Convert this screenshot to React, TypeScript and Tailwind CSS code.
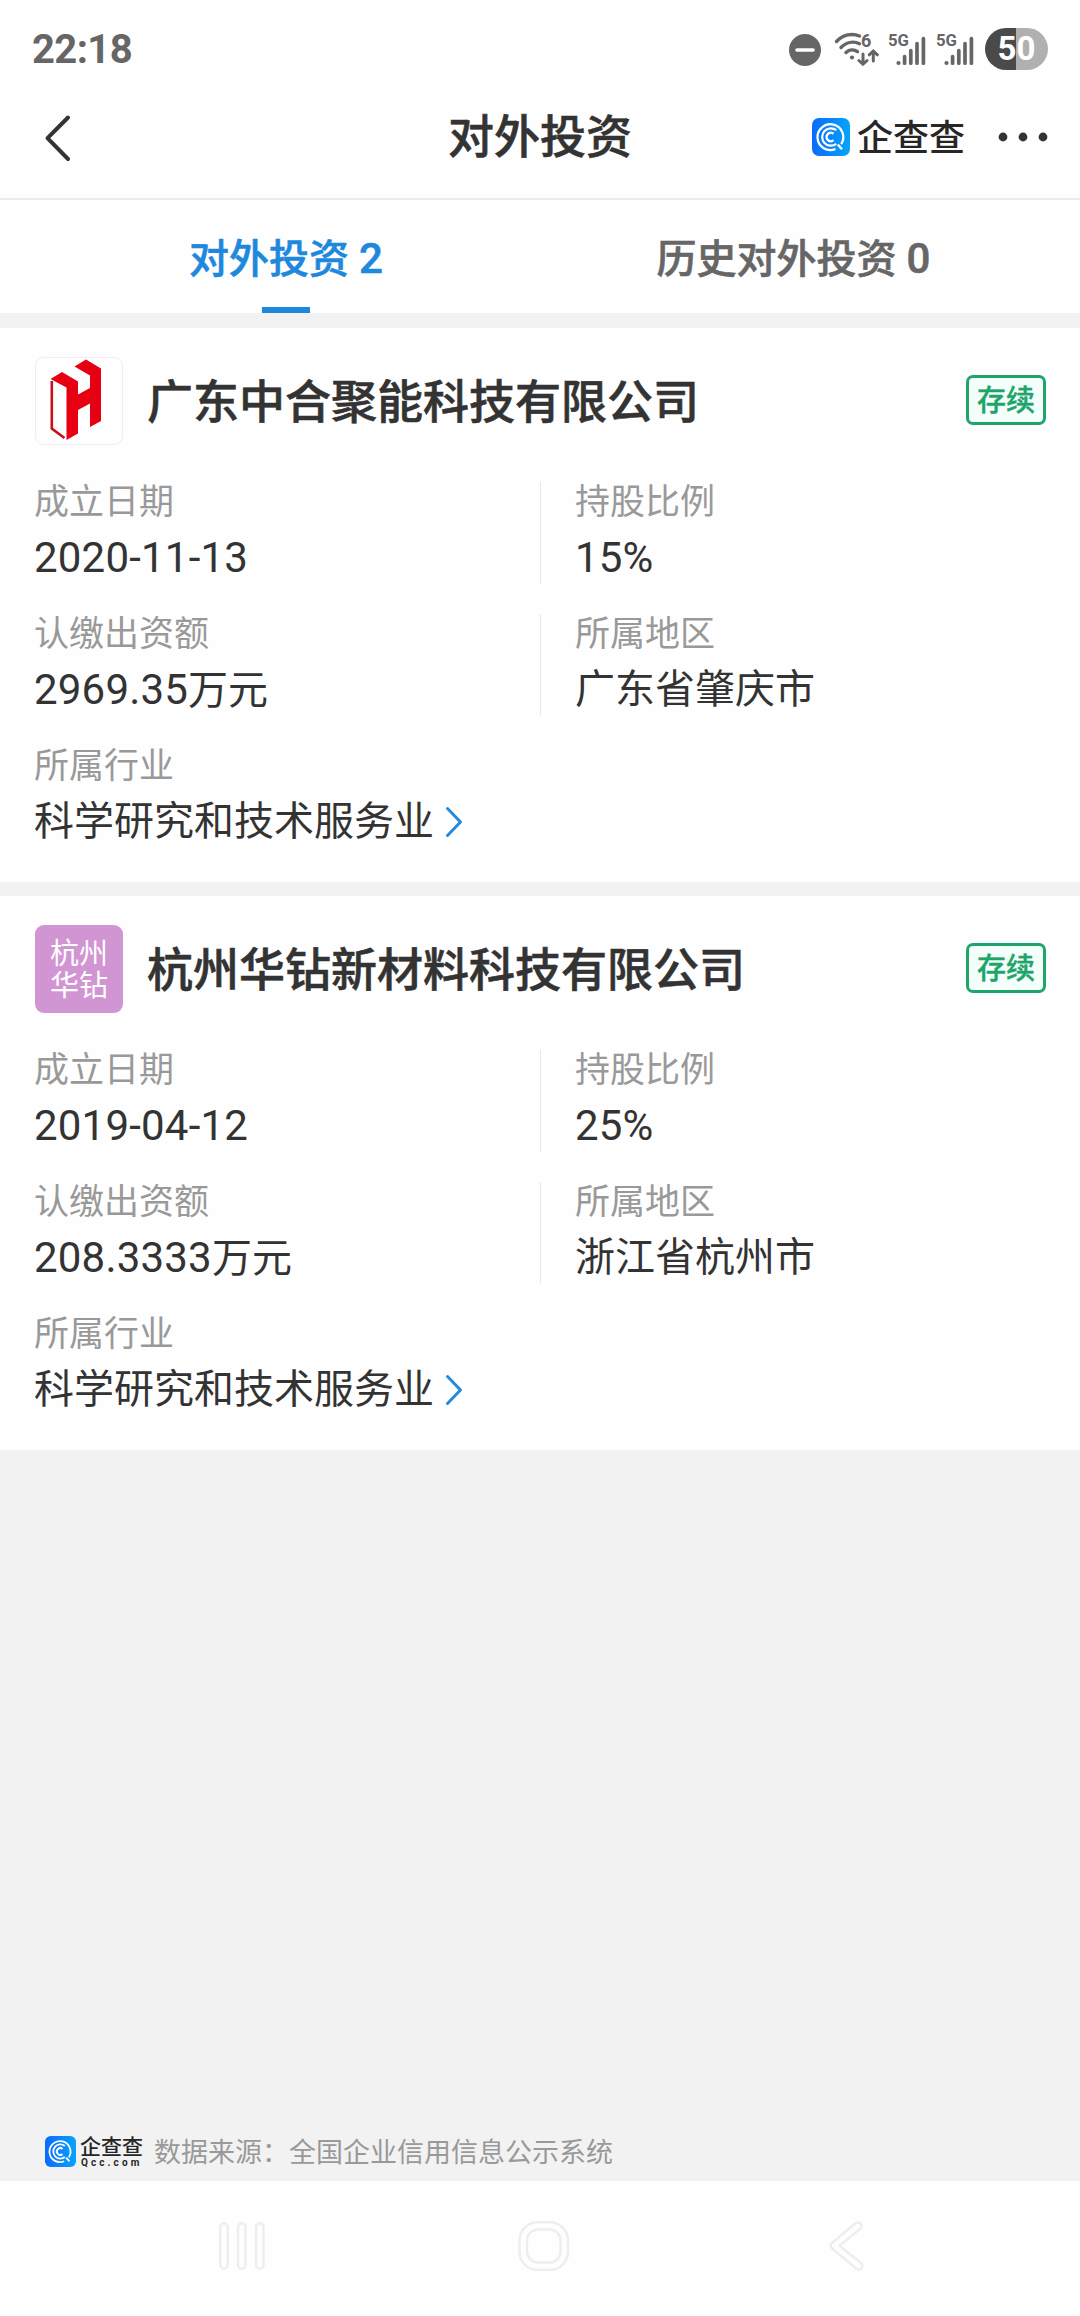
import { Fragment } from 'react'

interface Company {
  name: string
  founded: string
  ratio: string
  amount: string
  region: string
  industry: string
  logo: 'h' | 'text'
}

const companies: Company[] = [
  {
    name: '广东中合聚能科技有限公司',
    founded: '2020-11-13',
    ratio: '15%',
    amount: '2969.35万元',
    region: '广东省肇庆市',
    industry: '科学研究和技术服务业',
    logo: 'h',
  },
  {
    name: '杭州华钻新材料科技有限公司',
    founded: '2019-04-12',
    ratio: '25%',
    amount: '208.3333万元',
    region: '浙江省杭州市',
    industry: '科学研究和技术服务业',
    logo: 'text',
  },
]

// latin digits run slightly larger than the hanzi next to them
function Mixed({ text }: { text: string }) {
  return (
    <>
      {text.split(/([\d.%-]+)/).map((part, i) =>
        i % 2 ? (
          <span key={i} className="text-[42px] tracking-[0.2px]">
            {part}
          </span>
        ) : (
          <Fragment key={i}>{part}</Fragment>
        ),
      )}
    </>
  )
}

function Signal() {
  return (
    <svg width="39" height="34" viewBox="0 0 39 34" fill="none" className="shrink-0 overflow-visible">
      <text x="0" y="13.5" fontSize="17" fontWeight="700" fontFamily="Roboto, sans-serif" fill="#666" textLength="21" lengthAdjust="spacingAndGlyphs">
        5G
      </text>
      <circle cx="10.5" cy="31" r="2.1" fill="#666" />
      <path d="M16.6 24.5v6.7M22.8 18.5v12.7M29 11.5v19.7M35.4 6.5v24.7" stroke="#666" strokeWidth="3.7" strokeLinecap="round" />
    </svg>
  )
}

function StatusBar() {
  return (
    <div className="h-[98px] flex items-start justify-between pl-[32px] pr-[32px]">
      <div className="mt-[29px] text-[40px] leading-[42px] font-bold text-[#666] tracking-[-0.6px]">22:18</div>
      <div className="flex mt-[28px] h-[42px] items-center">
        <svg width="32" height="32" viewBox="0 0 32 32" className="mt-[2px]">
          <circle cx="16" cy="16" r="16" fill="#666" />
          <path d="M8 16h16" stroke="#fff" strokeWidth="3.6" strokeLinecap="round" />
        </svg>
        <svg width="46" height="36" viewBox="0 0 46 36" fill="none" stroke="#666" strokeWidth="3.4" strokeLinecap="round" className="ml-[13px]">
          <path d="M2.5 10.5C9 3.6 18 1.8 25.5 5" />
          <path d="M7 16.5c5-5.2 12-6.6 18.5-3.8" />
          <path d="M12 21.5c3.5-3.2 8-3.4 11.5-.8" />
          <circle cx="18" cy="26.5" r="2.1" fill="#666" stroke="none" />
          <path d="M29 23v10M24.9 29.5 29 33.3l4.1-3.8M39.3 30V20.5M35.2 23.8l4.1-3.8 4.1 3.8" strokeWidth="3" />
          <text x="27" y="16.3" fontSize="18" fontWeight="700" fontFamily="Roboto, sans-serif" fill="#666" stroke="none">
            6
          </text>
        </svg>
        <div className="ml-[8px] flex gap-[9px]">
          <Signal />
          <Signal />
        </div>
        <div className="relative ml-[10px] w-[63px] h-[42px] rounded-full overflow-hidden flex">
          <div className="w-[31px] bg-[#4a4a4a]" />
          <div className="flex-1 bg-[#b0b0b0]" />
          <span className="absolute inset-0 text-center text-[33px] leading-[42px] font-bold text-white">50</span>
        </div>
      </div>
    </div>
  )
}

function QccIcon({ size }: { size: number }) {
  return (
    <svg width={size} height={size} viewBox="0 0 38 38" fill="none" stroke="#fff" className="shrink-0">
      <defs>
        <linearGradient id="qcc" x1="0" y1="0" x2="1" y2="0">
          <stop offset="0" stopColor="#0a6bfb" />
          <stop offset="1" stopColor="#06a4fb" />
        </linearGradient>
      </defs>
      <rect width="38" height="38" rx="7" fill="url(#qcc)" stroke="none" />
      <path d="M29.2 26.2A12.9 12.9 0 1 0 23.5 31" strokeWidth="2.2" />
      <path d="M25.8 26.6 30 31.2" strokeWidth="2.4" />
      <path d="M24.3 12.2A8.7 8.7 0 1 0 24.3 25.8" strokeWidth="2.2" />
      <path d="M21.5 15.8A4.2 4.2 0 1 0 21.5 22.2" strokeWidth="2.4" />
    </svg>
  )
}

function HeaderBar() {
  return (
    <div className="h-[102px] border-b-2 border-[#ececec] grid grid-cols-[1fr_auto_1fr] items-start">
      <svg width="30" height="50" viewBox="0 0 30 50" fill="none" className="ml-[43px] mt-[15px]">
        <path d="M25 4.5 4.5 25.2 25 46" stroke="#333" strokeWidth="4" strokeLinecap="round" strokeLinejoin="round" />
      </svg>
      <h1 className="text-[46px] leading-[50px] mt-[14px] font-medium text-[#333] [-webkit-text-stroke:0.6px]">对外投资</h1>
      <div className="flex justify-end items-center h-[38px] mt-[20px] pr-[32px]">
        <QccIcon size={38} />
        <span className="ml-[7px] mt-[3px] text-[36px] leading-[38px] font-medium text-[#262626]">企查查</span>
        <svg width="50" height="10" viewBox="0 0 50 10" fill="#333" className="ml-[33px]">
          <circle cx="5" cy="5" r="4.4" />
          <circle cx="25" cy="5" r="4.4" />
          <circle cx="45" cy="5" r="4.4" />
        </svg>
      </div>
    </div>
  )
}

function Tabs() {
  return (
    <div className="h-[113px] flex text-[40px] leading-[52px] font-medium [-webkit-text-stroke:0.6px]">
      <div className="w-[572px] flex flex-col items-center justify-between text-[#1e88dd]">
        <span className="mt-[33px] flex items-baseline gap-[10px]">
          对外投资<Mixed text="2" />
        </span>
        <span className="w-[48px] h-[6px] bg-[#1e88dd]" />
      </div>
      <div className="w-[443px] flex justify-center text-[#666]">
        <span className="mt-[33px] flex items-baseline gap-[10px]">
          历史对外投资<Mixed text="0" />
        </span>
      </div>
    </div>
  )
}

function CompanyLogo({ kind }: { kind: Company['logo'] }) {
  if (kind === 'text') {
    return (
      <div className="size-[88px] rounded-[9px] bg-[#d295d3] text-white text-[29px] leading-[32px] pt-[2px] grid place-content-center">
        <span>杭州</span>
        <span>华钻</span>
      </div>
    )
  }
  return (
    <div className="size-[88px] rounded-[9px] border border-[#efefef] overflow-hidden">
      <svg width="86" height="86" viewBox="1 1 86 86" fill="#e60012">
        <path d="M15.5 22 27 15l16 9.5v13L55 31V18.5L39.5 9.5 51 2.5 66 11.5V64L55 70V46.5L43 53V76.5L31.5 83V30.5Z" />
        <path d="M16.8 24v47.5L29.5 81" fill="none" stroke="#c8101c" strokeWidth="2.6" />
      </svg>
    </div>
  )
}

function Field({ label, value, divider, arrow }: { label: string; value: string; divider?: boolean; arrow?: boolean }) {
  return (
    <div className={divider ? 'h-[102px] border-l border-[#e8e8e8] pl-[34px]' : 'h-[102px]'}>
      <div className="pt-[2px] text-[35px] leading-[38px] text-[#999]">{label}</div>
      <div className="mt-[11px] h-[50px] text-[40px] leading-[50px] text-[#333] flex items-baseline">
        <Mixed text={value} />
        {arrow && (
          <svg width="20" height="34" viewBox="0 0 20 34" fill="none" className="ml-[10px] self-center">
            <path d="M3.5 3.5 16.5 17 3.5 30.5" stroke="#2589dc" strokeWidth="3" strokeLinecap="round" strokeLinejoin="round" />
          </svg>
        )}
      </div>
    </div>
  )
}

function CompanyCard({ company }: { company: Company }) {
  return (
    <section className="bg-[#fefefe] h-[554px] pt-[29px] pl-[34px] pr-[34px]">
      <div className="flex items-center h-[88px] pl-px">
        <CompanyLogo kind={company.logo} />
        <h2 className="ml-[24px] flex-1 text-[46px] leading-[56px] pt-px font-medium text-[#333] [-webkit-text-stroke:0.6px]">{company.name}</h2>
        <span className="w-[80px] h-[50px] -mt-[2px] rounded-[7px] border-3 border-[#1fa56b] bg-[#f4fffb] text-[#1fa56b] text-[29px] leading-[46px] font-medium text-center [-webkit-text-stroke:0.4px]">
          存续
        </span>
      </div>
      <div className="mt-[37px] grid grid-cols-[506px_1fr] gap-y-[30px]">
        <Field label="成立日期" value={company.founded} />
        <Field label="持股比例" value={company.ratio} divider />
        <Field label="认缴出资额" value={company.amount} />
        <Field label="所属地区" value={company.region} divider />
        <Field label="所属行业" value={company.industry} arrow />
      </div>
    </section>
  )
}

function Footer() {
  return (
    <div className="mt-auto h-[45px] pl-[45px] flex items-start">
      <QccIcon size={31} />
      <div className="ml-[4px] w-[63px] pt-[2px] text-[#262626]">
        <div className="text-[21px] leading-[18px] font-medium">企查查</div>
        <div className="mt-[1px] text-[10px] leading-[11px] font-bold tracking-[3.1px] pl-px whitespace-nowrap">Qcc.com</div>
      </div>
      <p className="ml-[11px] mt-px text-[27px] leading-[32px] text-[#999]">数据来源：全国企业信用信息公示系统</p>
    </div>
  )
}

function NavBar() {
  return (
    <div className="h-[135px] bg-[#fefefe] flex pt-[40px] pl-[218px]">
      <svg width="48" height="50" viewBox="0 0 48 50" fill="none" stroke="#eee" strokeWidth="2.5">
        <rect x="2.2" y="2.2" width="7.5" height="45.5" rx="3.75" />
        <rect x="20" y="2.2" width="7.5" height="45.5" rx="3.75" />
        <rect x="38" y="2.2" width="7.5" height="45.5" rx="3.75" />
      </svg>
      <svg width="52" height="50" viewBox="0 0 52 50" fill="none" stroke="#eee" strokeWidth="2.5" className="ml-[252px]">
        <rect x="1.5" y="1.3" width="48.5" height="47.5" rx="18" />
        <rect x="9" y="8.5" width="33.5" height="33" rx="11" />
      </svg>
      <svg width="36" height="50" viewBox="0 0 36 50" fill="none" stroke="#eee" strokeWidth="2.5" strokeLinejoin="round" className="ml-[259px]">
        <path d="M26.5 2.3 2.6 22.3Q.4 24.7 2.6 27L27.5 47.8Q30 49.5 32.2 47.5 34.5 45 32.5 42.5L10.5 24.7 31.5 7.5Q33.5 4.8 31.5 2.6 29.2.6 26.5 2.3Z" />
      </svg>
    </div>
  )
}

export default function App() {
  return (
    <div className="w-[1080px] h-[2316px] bg-[#f2f2f2] flex flex-col overflow-hidden font-[Roboto,'Noto_Sans_CJK_SC',sans-serif]">
      <div className="bg-[#fefefe]">
        <StatusBar />
        <HeaderBar />
        <Tabs />
      </div>
      <div className="mt-[15px] flex flex-col gap-[14px]">
        {companies.map((c) => (
          <CompanyCard key={c.name} company={c} />
        ))}
      </div>
      <Footer />
      <NavBar />
    </div>
  )
}
